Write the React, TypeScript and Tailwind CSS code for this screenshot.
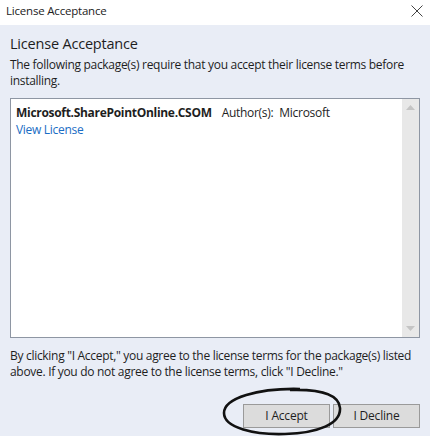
import React from "react";

export default function App() {
  return (
    <div className="relative w-[430px] h-[436px] flex flex-col bg-[#e9edf6] text-[#1e1e1e] overflow-hidden" style={{ fontFamily: '"Open Sans", "Noto Sans", sans-serif' }}>
      <div className="h-[25px] bg-white flex items-center justify-between pl-[6px] pr-[7px] shrink-0">
        <span className="text-[11.5px] tracking-[-0.2px] text-[#222] mt-[-3px]">License Acceptance</span>
        <svg width="12" height="12" viewBox="0 0 12 12" className="mt-[-4px]">
          <path d="M0.5 0.5L11.5 11.5M11.5 0.5L0.5 11.5" stroke="#444" strokeWidth="1" fill="none" />
        </svg>
      </div>
      <div className="flex flex-col px-[10px] pt-[9px]">
        <div className="text-[14.5px] leading-[20px] tracking-[-0.2px] text-[#1e1e1e]">License Acceptance</div>
        <p className="mt-[3px] text-[12px] leading-[16px] text-[#1e1e1e] tracking-[-0.3px]">
          The following package(s) require that you accept their license terms before installing.
        </p>
        <div className="mt-[9px] h-[240px] border border-[#8e96a3] bg-white flex">
          <div className="flex-1 pl-[5px] pt-[5px]">
            <div className="flex items-baseline text-[12px] leading-[17px] tracking-[-0.3px]">
              <span className="font-bold">Microsoft.SharePointOnline.CSOM</span>
              <span className="ml-[10px]">Author(s):</span>
              <span className="ml-[6px]">Microsoft</span>
            </div>
            <div className="text-[12px] leading-[17px] tracking-[-0.3px] text-[#1a6dc4]">View License</div>
          </div>
          <div className="w-[17px] bg-[#e8e8e8] flex flex-col justify-between items-center py-[6px]">
            <svg width="9" height="5" viewBox="0 0 9 5"><path d="M0 5L4.5 0L9 5Z" fill="#c4c4c4" /></svg>
            <svg width="9" height="5" viewBox="0 0 9 5"><path d="M0 0L4.5 5L9 0Z" fill="#c4c4c4" /></svg>
          </div>
        </div>
        <p className="mt-[10px] text-[12px] leading-[16px] text-[#1e1e1e] tracking-[-0.3px]">
          By clicking "I Accept," you agree to the license terms for the package(s) listed above. If you do not agree to the license terms, click "I Decline."
        </p>
        <div className="mt-[24px] flex justify-end gap-[3px]">
          <button className="w-[87px] h-[24px] bg-[#dcdcdc] border border-[#9a9a9a] text-[12px] tracking-[-0.2px] text-[#1e1e1e]">I Accept</button>
          <button className="w-[87px] h-[24px] bg-[#dcdcdc] border border-[#9a9a9a] text-[12px] tracking-[-0.2px] text-[#1e1e1e]">I Decline</button>
        </div>
      </div>
      <svg className="absolute left-0 top-0 pointer-events-none" width="430" height="436" viewBox="0 0 430 436">
        <path d="M300 389 C 258 388, 224 398, 224 413 C 224 428, 255 435, 285 434 C 318 433, 341 424, 340 408 C 339 395, 322 389, 290 390" fill="none" stroke="#111" strokeWidth="2.6" />
      </svg>
    </div>
  );
}
